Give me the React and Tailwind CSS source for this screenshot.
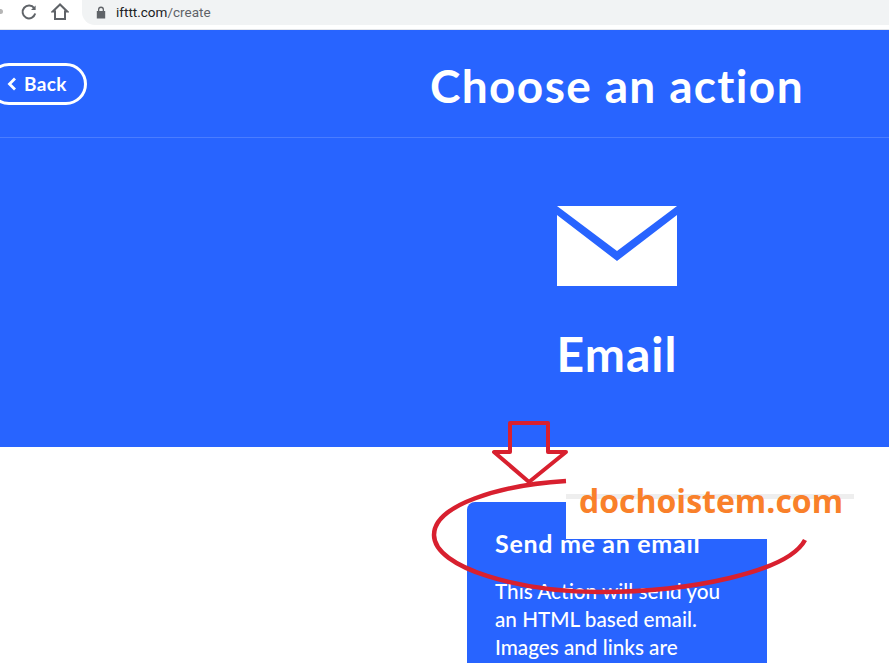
import React from 'react'

const Toolbar = () => (
    <div className="h-[30px] bg-white flex items-start border-b border-[#e4e6ea] font-['Roboto',sans-serif]">
        <div className="w-[3px] h-[5px] mt-[9px] bg-[#b5b5b5] rounded-r-full"></div>
        <svg className="ml-[17px] mt-[3px]" width="18" height="18" viewBox="0 0 18 18" fill="none">
            <path d="M14.2 5.2A6.4 6.4 0 1 0 15.2 10.6" stroke="#5f6368" strokeWidth="2" />
            <path d="M15.6 2.4V7H11Z" fill="#5f6368" />
        </svg>
        <svg className="ml-[13px] mt-[2px]" width="18" height="20" viewBox="0 0 18 20" fill="none">
            <path d="M9 2.5 1.8 9.5H4V17H14V9.5H16.2Z" stroke="#5f6368" strokeWidth="2" strokeLinejoin="miter" />
        </svg>
        <div className="ml-[13px] flex-1 h-[25px] bg-[#f1f3f4] rounded-bl-[13px] flex items-center pl-[14px]">
            <svg width="10" height="13" viewBox="0 0 10 13">
                <path d="M2 5V3.6a3 3 0 0 1 6 0V5h1.2v7.5H.8V5Zm1.3 0h3.4V3.6a1.7 1.7 0 0 0-3.4 0Z" fill="#5f6368" />
            </svg>
            <span className="ml-[10px] text-[13.5px] text-[#202124]">ifttt.com<span className="text-[#5f6368]">/create</span></span>
        </div>
    </div>
)

const Header = () => (
    <div className="h-[108px] border-b border-[#4a7dff] flex items-center">
        <button className="ml-[-12px] mt-[1px] w-[99px] h-[42px] border-[3px] border-white rounded-full flex items-center pl-[15px] text-white text-[19px] font-bold tracking-[0.4px]">
            <svg width="12" height="16" viewBox="0 0 12 16" fill="none">
                <path d="M9 2.5 3.5 8 9 13.5" stroke="white" strokeWidth="2.8" />
            </svg>
            <span className="ml-[6px]">Back</span>
        </button>
        <h1 className="ml-[343px] mt-[3px] text-white text-[46px] font-bold tracking-[1.35px]">Choose an action</h1>
    </div>
)

const Hero = () => (
    <div className="h-[309px] pl-[345px] flex flex-col items-center">
        <svg className="mt-[68px]" width="120" height="80" viewBox="0 0 120 80">
            <path d="M0 0H120L60 45Z M0 9 60 55 120 9V80H0Z" fill="white" />
        </svg>
        <h2 className="mt-[36px] text-white text-[48px] leading-[64px] font-bold tracking-[1px]">Email</h2>
    </div>
)

const ActionCard = () => (
    <div className="ml-[467px] mt-[55px] w-[300px] h-[161px] bg-[#2864ff] rounded-tl-[8px] overflow-hidden pl-[28px] pr-[40px] pt-[25px] text-white">
        <h3 className="text-[25px] leading-[32px] font-bold tracking-[0.7px]">Send me an email</h3>
        <p className="mt-[18px] text-[20.7px] leading-[28px] font-medium">This Action will send you an HTML based email. Images and links are</p>
    </div>
)

// watermark patch, arrow and circle drawn over the screenshot
const Annotations = () => (
    <>
        <div className="absolute left-[566px] top-[494px] w-[288px] h-[45px] bg-white">
            <div className="h-[5px] bg-[#eeeeee]"></div>
            <span className="absolute left-[13px] top-[-18px] text-[32px] leading-[50px] font-bold text-[#f9802a] font-['Open_Sans',sans-serif] whitespace-nowrap">dochoistem.com</span>
        </div>
        <svg className="absolute left-0 top-0 pointer-events-none" width="889" height="667" viewBox="0 0 889 667" fill="none">
            <path d="M510 423H548V452H566L529 482 494 452H510Z" stroke="#d8202f" strokeWidth="4" strokeLinejoin="round" />
            <path d="M566 481C500 485 434 505 434 535C434 568 520 592 600 592C690 592 788 572 805 540" stroke="#d8202f" strokeWidth="4.5" />
        </svg>
    </>
)

const App = () => {
    return (
        <div className="relative w-[889px] h-[667px] overflow-hidden bg-white font-['Lato',sans-serif]">
            <Toolbar />
            <div className="bg-[#2864ff]">
                <Header />
                <Hero />
            </div>
            <ActionCard />
            <Annotations />
        </div>
    )
}

export default App
